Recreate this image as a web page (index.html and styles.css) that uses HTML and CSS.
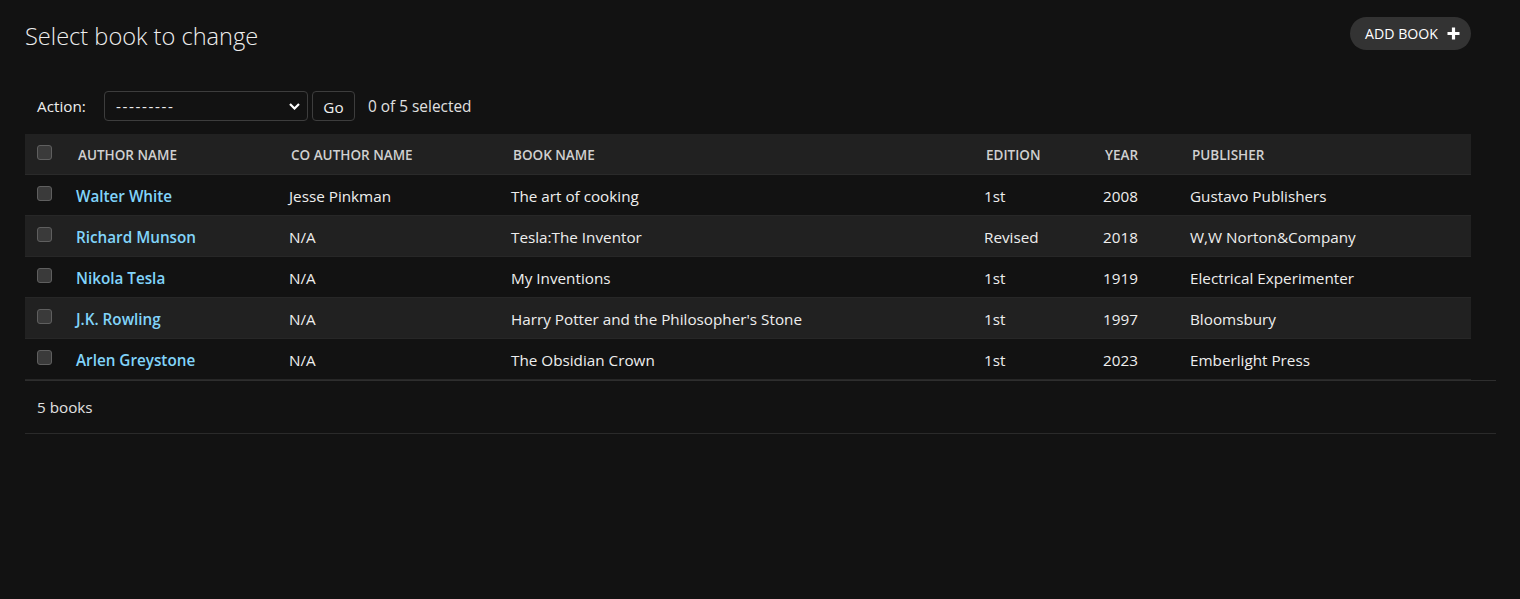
FILE: index.html
```html
<!DOCTYPE html>
<html lang="en">
<head>
<meta charset="utf-8">
<title>Select book to change</title>
<link rel="stylesheet" href="styles.css">
</head>
<body>
<div class="content">
  <div class="page-head">
    <h1>Select book to change</h1>
    <a class="add-btn" href="#">Add book
      <svg class="plus" width="13" height="13" viewBox="0 0 13 13"><path d="M6.5 0.5V12.5M0.5 6.5H12.5" stroke="#fff" stroke-width="3.2"/></svg>
    </a>
  </div>
  <div class="changelist">
    <div class="actions">
      <span class="action-label">Action:</span>
      <div class="select"><span class="dashes">---------</span>
        <svg width="11" height="7" viewBox="0 0 11 7"><path d="M1 1L5.5 5.5L10 1" fill="none" stroke="#fff" stroke-width="2.2"/></svg>
      </div>
      <button class="go">Go</button>
      <span class="counter">0 of 5 selected</span>
    </div>
    <table class="results">
      <colgroup>
        <col class="c-cb"><col class="c-author"><col class="c-co"><col class="c-book"><col class="c-ed"><col class="c-year"><col class="c-pub">
      </colgroup>
      <thead>
        <tr>
          <th class="cb"><span class="box"></span></th>
          <th>Author name</th>
          <th>Co author name</th>
          <th>Book name</th>
          <th>Edition</th>
          <th>Year</th>
          <th>Publisher</th>
        </tr>
      </thead>
      <tbody>
        <tr><td class="cb"><span class="box"></span></td><td><a href="#">Walter White</a></td><td>Jesse Pinkman</td><td>The art of cooking</td><td>1st</td><td>2008</td><td>Gustavo Publishers</td></tr>
        <tr><td class="cb"><span class="box"></span></td><td><a href="#">Richard Munson</a></td><td>N/A</td><td>Tesla:The Inventor</td><td>Revised</td><td>2018</td><td>W,W Norton&amp;Company</td></tr>
        <tr><td class="cb"><span class="box"></span></td><td><a href="#">Nikola Tesla</a></td><td>N/A</td><td>My Inventions</td><td>1st</td><td>1919</td><td>Electrical Experimenter</td></tr>
        <tr><td class="cb"><span class="box"></span></td><td><a href="#">J.K. Rowling</a></td><td>N/A</td><td>Harry Potter and the Philosopher's Stone</td><td>1st</td><td>1997</td><td>Bloomsbury</td></tr>
        <tr><td class="cb"><span class="box"></span></td><td><a href="#">Arlen Greystone</a></td><td>N/A</td><td>The Obsidian Crown</td><td>1st</td><td>2023</td><td>Emberlight Press</td></tr>
      </tbody>
    </table>
    <p class="paginator">5 books</p>
  </div>
</div>
</body>
</html>
```

FILE: styles.css
```css
* { box-sizing: border-box; }
html, body { margin: 0; padding: 0; }
body {
  background: #121212;
  color: #eeeeee;
  font-family: "Open Sans", "Noto Sans", sans-serif;
  font-size: 15.25px;
  width: 1520px;
  height: 599px;
  overflow: hidden;
}
.content {
  padding: 17px 24px 0 25px;
}
.page-head {
  display: flex;
  justify-content: space-between;
  align-items: flex-start;
  padding-right: 25px;
  margin-bottom: 28px;
}
h1 {
  margin: 4px 0 0;
  font-size: 23.6px;
  font-weight: 300;
  line-height: 30px;
  color: #eeeeee;
}
.add-btn {
  display: flex;
  align-items: center;
  gap: 9px;
  height: 33px;
  padding: 0 11px 0 15px;
  border-radius: 17px;
  background: #333333;
  color: #ffffff;
  text-decoration: none;
  text-transform: uppercase;
  font-size: 14.15px;
}
.actions {
  display: flex;
  align-items: center;
  padding: 12px 12px 13px;
  height: 55px;
}
.action-label { color: #eeeeee; width: 67px; }
.select {
  width: 204px;
  height: 30px;
  border: 1px solid #3d3d3d;
  border-radius: 4px;
  display: flex;
  align-items: center;
  justify-content: space-between;
  padding: 0 7px 0 11px;
}
.dashes { letter-spacing: 1.6px; }
.go {
  margin-left: 4px;
  width: 43px;
  height: 30px;
  background: #121212;
  border: 1px solid #3d3d3d;
  border-radius: 4px;
  color: #eeeeee;
  font: inherit;
  padding: 0;
  padding-top: 2px;
}
.counter { margin-left: 13px; color: #e0e0e0; font-size: 15.4px; }
.results {
  width: 1446px;
  border-collapse: collapse;
  table-layout: fixed;
}
.c-cb { width: 41px; }
.c-author { width: 213px; }
.c-co { width: 222px; }
.c-book { width: 473px; }
.c-ed { width: 119px; }
.c-year { width: 87px; }
.c-pub { width: 291px; }
th {
  background: #212121;
  height: 40px;
  padding: 2px 0 0 12px;
  text-align: left;
  text-transform: uppercase;
  font-size: 13.5px;
  font-weight: 600;
  color: #d0d0d0;
  border-bottom: 1px solid #2a2a2a;
  vertical-align: middle;
}
td {
  height: 41px;
  padding: 2px 0 0 10px;
  border-bottom: 1px solid #272727;
  vertical-align: middle;
  white-space: nowrap;
}
tbody tr:nth-child(even) td { background: #212121; }
th.cb, td.cb { padding-left: 12px; }
th.cb { padding-top: 0; }
td.cb { vertical-align: top; padding-top: 11px; }
.box {
  display: block;
  width: 15px;
  height: 15px;
  border: 1px solid #5f5f5f;
  background: #3a3a3a;
  border-radius: 3px;
}
th.cb .box { margin-top: -3px; }
td a {
  color: #81d4fa;
  font-weight: 600;
  text-decoration: none;
}
.paginator {
  margin: 0;
  height: 54px;
  border-top: 1px solid #2e2e2e;
  border-bottom: 1px solid #2a2a2a;
  padding: 0 12px;
  display: flex;
  align-items: center;
  color: #e0e0e0;
}
```
